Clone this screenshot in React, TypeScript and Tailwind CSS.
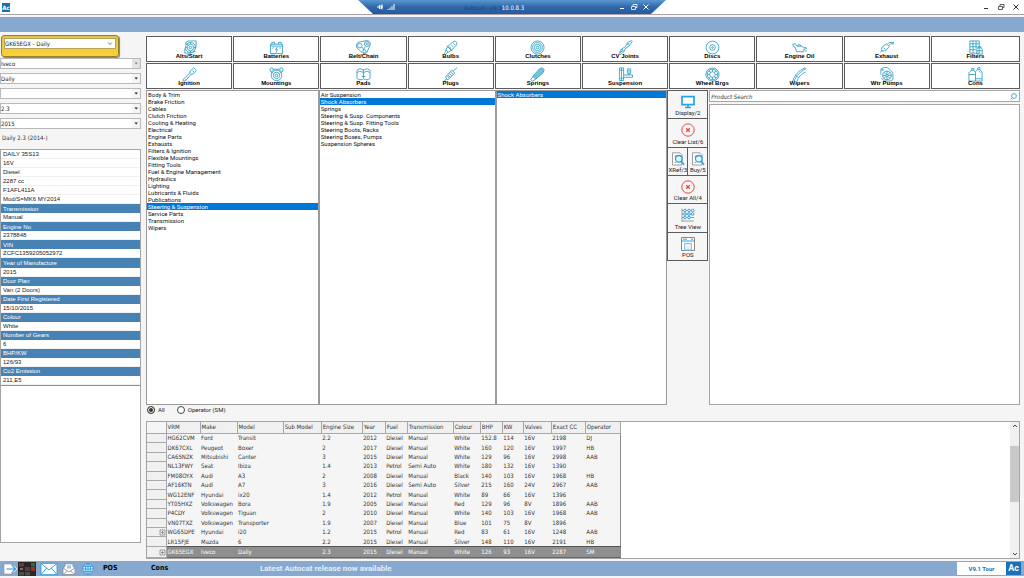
import { useState } from "react";
import type { ReactNode } from "react";

const categoryIcons: Record<string, ReactNode> = {
  alternator: (
    <>
      <circle cx="9" cy="8" r="5.4" />
      <circle cx="9" cy="8" r="3.4" />
      <circle cx="9" cy="8" r="1.3" />
      <path d="M4 5V2.5L7 1h8v6l-1 2M3 9v5h6l5-2M5 4l2 2M12 10l2 2M9 2.6v2M9 11.5v2M3.6 8h2M12.4 8h2" />
    </>
  ),
  battery: (
    <>
      <path d="M1.5 4.5h13v10h-13zM3 4.5v-2h3v2M10 4.5v-2h3v2M1.5 6.5h13" />
      <path d="M8.8 7.5 7 10.5h2L7.4 13.4M3.5 8.5h1.6M11 8.5h1.6" />
    </>
  ),
  belt: (
    <>
      <circle cx="4" cy="6" r="2.4" />
      <circle cx="11.5" cy="4.2" r="2.6" />
      <circle cx="11.5" cy="4.2" r=".8" />
      <circle cx="9" cy="12" r="1.8" />
      <path d="M3 2.2 11.500.6c3 0 4.500 3 3.300 5.400l-3.300 7.400c-1 1.800-3.200 1.800-4.500.4L1 8.500C-.3 6 .6 2.800 3 2.200zM6.500 7.500l1.500 2.800 1.800-3.200" />
    </>
  ),
  bulb: (
    <>
      <path d="M10 2.5 13 1l2 2-1.2 3L9 11 5 7z" />
      <path d="m5 7-1.8 3.4L5.6 13 9 11M3.6 10.4 1.5 14.6M5.4 12.8 3 15M11 3.5l1.8 1.8M9 5.5l1.8 1.8M7 7.5 8.6 9M4 6l6 5.6" />
    </>
  ),
  clutch: (
    <>
      <circle cx="8" cy="8" r="7" />
      <circle cx="8" cy="8" r="5.2" />
      <circle cx="8" cy="8" r="3.4" />
      <circle cx="8" cy="8" r="1.4" />
    </>
  ),
  joint: (
    <>
      <path d="m11.500 2 2.800-1.400.8 1L13.500 4 11.600 6.600 8.400 8.600l-2 3.600L3 15.400 1.400 14l2.400-4.400L7.600 7.400l2-3.800z" />
      <path d="m9.600 3.600 2 2M3.800 9.600l2.600 2.600M4 12l1 1M4.600 10.400l-2 3.600M12 3l-1.500 2" />
    </>
  ),
  disc: (
    <>
      <circle cx="8" cy="8" r="6.8" />
      <circle cx="8" cy="8" r="3" />
      <circle cx="8" cy="8" r=".8" />
    </>
  ),
  oil: (
    <path d="M.8 4.500 3.400 4l2 2.600h4.800l2.200 1.600 2.400-.4.600 1.400-2.800.6V12.500H4.800L3.600 8 1.400 7zM6 6.600l.4-1.400h2.400l.6 1.400M15 10.600v1.800" />
  ),
  exhaust: (
    <path d="M3.600 7.200 8 4l3 3-3.800 4.400-3.800.4-.8-2zM3.400 11 1.200 13.500M9 4.600 10.800 2.600H16M10.600 6l1.800-2H16M5 8.500l2 1.500" />
  ),
  filter: (
    <>
      <path d="M2 1h10v13H2zM2 4h10M2 7.200h8M2 10.400h7M5.300 1v13M8.600 1v8" />
      <path d="M10 8.400h4.400l.8 1.600v5H9.400v-5zM11 8.400V7h2.400v1.400M9.600 11.400h5.600" />
    </>
  ),
  key: (
    <>
      <path d="M9 4 12.600.8l2.800 2.800L12.200 7.200 9.600 8 8.200 6.600z" />
      <path d="M8.200 6.600 1.400 13v2h2l6.200-7M3 13.200l1.400 1M5 11.200l1.400 1.200M11 3.600l1.800 1.800" />
    </>
  ),
  mounting: (
    <>
      <circle cx="8" cy="9" r="5.600" />
      <circle cx="8" cy="9" r="3.400" />
      <circle cx="8" cy="9" r="1.400" />
      <circle cx="2.800" cy="2.800" r="1.800" />
      <circle cx="13.200" cy="2.800" r="1.800" />
      <path d="M4.600 2.400h6.800M1.600 4.400l1.800 2.400M14.400 4.400l-1.800 2.400" />
    </>
  ),
  pads: (
    <path d="M1 3.500 4 1.800 7.500 3h1L12 1.800l3 1.700v8.500l-2 1.500H9.500L8 12.500l-1.500 1H3L1 12zM8 3v9.500M1 6l3-1.500L8 5.800l4-1.300L15 6M6 10h4" />
  ),
  plug: (
    <>
      <path d="m11 4 4-3.200M9.400 3.400l3.200 3L7.800 11 5 8.200zM5 8.200 2.800 10.600 4 13l1.400.6L7.800 11" />
      <path d="m3.400 12.600-2.200 2.800M8 5l3 3M6.600 6.600l3 3M4.600 9.600l2 2" />
    </>
  ),
  shock: (
    <>
      <path d="m10 2 3-1.200 2.200 2L14 6 6 13 3 10z" fill="#8fd0e6" />
      <path d="m3 10-2 3.400L2.600 15 6 13M4.600 8.600l3 3M6.200 7l3 3M8 5.400l3 3M9.600 3.800l3 3M11.400 2.400l2.600 2.600" />
    </>
  ),
  suspension: (
    <>
      <path d="M1.500 1h4.500v13.500H1.500zM3.700 1v13.500M1.500 12h4.500M1.500 3.500h4.500" />
      <path d="M6 8.500h9.500V11H6M11 8.500v-2M12.500 8.500v-2M10 2h3.500v4.500H10zM10 4.200h3.500" />
    </>
  ),
  bearing: (
    <>
      <circle cx="8" cy="8" r="7" />
      <circle cx="8" cy="8" r="5.600" />
      <circle cx="8" cy="8" r="3" />
      <path d="M8 2.400v2.400M8 11.200v2.400M2.400 8h2.400M11.200 8h2.400M4 4l1.700 1.700M10.300 10.300 12 12M12 4l-1.700 1.700M5.700 10.300 4 12" />
    </>
  ),
  wiper: (
    <path d="M.8 15C2.500 9 7 3.500 14 1l.6 1.200C8.400 5 4.400 9.600 2.400 15M5.500 15c1-4 4-7.600 9.300-9.600M4 9l2.500 2" />
  ),
  pump: (
    <>
      <circle cx="8.500" cy="9" r="4.600" />
      <circle cx="8.500" cy="9" r="1.200" />
      <path d="M2 8V2l3-1.400h4L13 4l1.800 3v6.500L12 15H6l-3.600-3M8.500 4.400v3.400M8.500 10.200v3.400M3.900 9h3.400M9.700 9h3.400M5.200 5.700l2.400 2.400M9.400 9.900l2.400 2.400M11.800 5.700 9.400 8.100M5.200 12.300l2.400-2.400" />
      <circle cx="4" cy="3" r=".8" />
    </>
  ),
  bottles: (
    <>
      <path d="M2 5 4.200 3.400h2L8 5.400V15H1V6zM4 3.400V1.500h2.400v1.900M1 8h7" />
      <path d="M8 4.800 10.400 2.800h2.200L15 5.400V15H8M10.400 2.800V.8h2.400v2M8 12.500h7M12 4.500l1.500 1.500" />
    </>
  ),
};

const categories: [string, string][] = [
  ["Alts/Start", "alternator"],
  ["Batteries", "battery"],
  ["Belt/Chain", "belt"],
  ["Bulbs", "bulb"],
  ["Clutches", "clutch"],
  ["CV Joints", "joint"],
  ["Discs", "disc"],
  ["Engine Oil", "oil"],
  ["Exhaust", "exhaust"],
  ["Filters", "filter"],
  ["Ignition", "key"],
  ["Mountings", "mounting"],
  ["Pads", "pads"],
  ["Plugs", "plug"],
  ["Springs", "shock"],
  ["Suspension", "suspension"],
  ["Wheel Brgs", "bearing"],
  ["Wipers", "wiper"],
  ["Wtr Pumps", "pump"],
  ["Cons", "bottles"],
];

const sections = [
  "Body & Trim", "Brake Friction", "Cables", "Clutch Friction", "Cooling & Heating",
  "Electrical", "Engine Parts", "Exhausts", "Filters & Ignition", "Flexible Mountings",
  "Fitting Tools", "Fuel & Engine Management", "Hydraulics", "Lighting",
  "Lubricants & Fluids", "Publications", "Steering & Suspension", "Service Parts",
  "Transmission", "Wipers",
];

const groups = [
  "Air Suspension", "Shock Absorbers", "Springs", "Steering & Susp. Components",
  "Steering & Susp. Fitting Tools", "Steering Boots, Racks", "Steering Boxes, Pumps",
  "Suspension Spheres",
];

const details: { text: string; heading?: boolean }[] = [
  { text: "DAILY 35S13" },
  { text: "16V" },
  { text: "Diesel" },
  { text: "2287 cc" },
  { text: "F1AFL411A" },
  { text: "Mod/S=MK6 MY2014" },
  { text: "Transmission", heading: true },
  { text: "Manual" },
  { text: "Engine No", heading: true },
  { text: "2378848" },
  { text: "VIN", heading: true },
  { text: "ZCFC1359205052972" },
  { text: "Year of Manufacture", heading: true },
  { text: "2015" },
  { text: "Door Plan", heading: true },
  { text: "Van (2 Doors)" },
  { text: "Date First Registered", heading: true },
  { text: "15/10/2015" },
  { text: "Colour", heading: true },
  { text: "White" },
  { text: "Number of Gears", heading: true },
  { text: "6" },
  { text: "BHP/KW", heading: true },
  { text: "126/93" },
  { text: "Co2 Emission", heading: true },
  { text: "211,E5" },
];

const columns = [
  "VRM", "Make", "Model", "Sub Model", "Engine Size", "Year", "Fuel",
  "Transmission", "Colour", "BHP", "KW", "Valves", "Exact CC", "Operator",
];

const vehicles = [
  ["HG62CVM", "Ford", "Transit", "", "2.2", "2012", "Diesel", "Manual", "White", "152.8", "114", "16V", "2198", "DJ"],
  ["DK67CXL", "Peugeot", "Boxer", "", "2", "2017", "Diesel", "Manual", "White", "160", "120", "16V", "1997", "HB"],
  ["CA65NZK", "Mitsubishi", "Canter", "", "3", "2015", "Diesel", "Manual", "White", "129", "96", "16V", "2998", "AAB"],
  ["NL13FWY", "Seat", "Ibiza", "", "1.4", "2013", "Petrol", "Semi Auto", "White", "180", "132", "16V", "1390", ""],
  ["FM08OYX", "Audi", "A3", "", "2", "2008", "Diesel", "Manual", "Black", "140", "103", "16V", "1968", "HB"],
  ["AF16KTN", "Audi", "A7", "", "3", "2016", "Diesel", "Semi Auto", "Silver", "215", "160", "24V", "2967", "AAB"],
  ["WG12ENF", "Hyundai", "ix20", "", "1.4", "2012", "Petrol", "Manual", "White", "89", "66", "16V", "1396", ""],
  ["YT05HXZ", "Volkswagen", "Bora", "", "1.9", "2005", "Diesel", "Manual", "Red", "129", "96", "8V", "1896", "AAB"],
  ["P4CDY", "Volkswagen", "Tiguan", "", "2", "2010", "Diesel", "Manual", "White", "140", "103", "16V", "1968", "AAB"],
  ["VN07TXZ", "Volkswagen", "Transporter", "", "1.9", "2007", "Diesel", "Manual", "Blue", "101", "75", "8V", "1896", ""],
  ["WG65DPE", "Hyundai", "i20", "", "1.2", "2015", "Petrol", "Manual", "Red", "83", "61", "16V", "1248", "AAB"],
  ["LR15FJE", "Mazda", "6", "", "2.2", "2015", "Diesel", "Manual", "Silver", "148", "110", "16V", "2191", "HB"],
  ["GK65EGX", "Iveco", "Daily", "", "2.3", "2015", "Diesel", "Manual", "White", "126", "93", "16V", "2287", "SM"],
];

function WindowControls({ className }: { className: string }) {
  return (
    <div className={className}>
      <button type="button" aria-label="Minimise">
        <svg className="size-2" viewBox="0 0 8 8" fill="none" stroke="currentColor">
          <path d="M2 5.500h4" />
        </svg>
      </button>
      <button type="button" aria-label="Restore">
        <svg className="size-2" viewBox="0 0 8 8" fill="none" stroke="currentColor" strokeWidth=".8">
          <path d="M1.500 3.500h4v3h-4zM3 3.500v-2h4v3H5.500" />
        </svg>
      </button>
      <button type="button" aria-label="Close">
        <svg className="size-2" viewBox="0 0 8 8" fill="none" stroke="currentColor">
          <path d="m1.500 1.500 5 5M6.500 1.500l-5 5" />
        </svg>
      </button>
    </div>
  );
}

function TitleBar() {
  return (
    <header className="grid h-[15px] shrink-0 grid-cols-[1fr_308px_1fr] border-b border-[#a9a3a8] bg-white">
      <div className="flex items-center pl-[2px]">
        <span className="flex h-[9px] w-2 items-center justify-center bg-[#1a6fa8] text-[6px] font-bold text-white">Ac</span>
      </div>
      <div className="grid grid-cols-[1fr_auto_1fr] items-center bg-linear-to-b from-[#5b97cf] via-[#2f68aa] to-[#265a9b] pr-4 pl-[18px] text-[6px] text-white [clip-path:polygon(0_0,100%_0,calc(100%-15px)_100%,15px_100%)]">
        <div className="flex items-center justify-between">
          <svg className="h-2 w-5" viewBox="0 0 20 8" fill="none" stroke="currentColor">
            <path d="M1 4h2.500M3.500 2v4M3.500 3h2.500v2H3.500M6 1.500v5" />
            <path d="M12 7V6M14 7V4.500M16 7V3M18 7V1" />
          </svg>
          <span className="text-[#1d4780]">Autocat - v9.1</span>
        </div>
        <span>10.0.8.3</span>
        <WindowControls className="flex items-center justify-end gap-1" />
      </div>
      <WindowControls className="flex items-center justify-end gap-[7px] pr-1 text-[#333]" />
    </header>
  );
}

function Picker({ label, value, disabled = false }: { label: string; value: string; disabled?: boolean }) {
  return (
    <div className="relative flex h-[11px] border border-[#b9b9b9] bg-white">
      <select aria-label={label} disabled={disabled} className="w-full appearance-none text-[6px] leading-[9px] text-[#222] opacity-100 outline-none">
        <option>{value}</option>
      </select>
      <svg
        className={`pointer-events-none absolute inset-y-0 right-0 h-full w-2 ${disabled ? "bg-[#e4e4e4] text-[#888]" : "bg-[#f4f4f4] text-[#222]"}`}
        viewBox="0 0 8 9"
        fill="currentColor"
      >
        <path d="M2.500 3.600h3.400L4.200 5.600z" />
      </svg>
    </div>
  );
}

function VehiclePanel() {
  return (
    <aside className="flex w-[141px] shrink-0 flex-col pb-4">
      <div className="mr-[22px] ml-px h-[22px] rounded-[3px] border border-[#96802c] bg-linear-to-b from-[#e2c24b] to-[#fbd035] p-[2px] shadow-[1px_1px_1px_#8c804f]">
        <div className="relative flex h-[11px] border border-[#b9a55c] bg-white">
          <select aria-label="Vehicle" className="w-full appearance-none text-[6px] leading-[9px] text-[#222] outline-none">
            <option>GK65EGX - Daily</option>
          </select>
          <svg className="pointer-events-none absolute inset-y-0 right-px h-full w-2" viewBox="0 0 8 9" fill="none" stroke="#555" strokeWidth=".8">
            <path d="m2 3.500 2 2 2-2" />
          </svg>
        </div>
      </div>
      <div className="mt-px flex flex-col gap-1">
        <Picker label="Make" value="Iveco" disabled />
        <Picker label="Model" value="Daily" />
        <Picker label="Sub model" value="" />
        <Picker label="Engine size" value="2.3" />
        <Picker label="Year" value="2015" />
      </div>
      <p className="mb-[3px] pl-[2px] text-[6px] leading-[17px] text-[#333]">Daily 2.3 (2014-)</p>
      <div className="flex flex-1 flex-col border border-[#a5a5a5] bg-white">
        <ul className="grid h-[236px] shrink-0 auto-rows-fr border-b border-[#8f8f8f] font-['Liberation_Sans',Arial,sans-serif] text-[6px] leading-[8px]">
          {details.map((row) => (
            <li
              key={row.text}
              className={
                row.heading
                  ? "flex items-center bg-[#4682b4] pl-[2px] text-white"
                  : "flex items-center border-b border-[#f0f0f0] pl-[2px] text-[#222]"
              }
            >
              {row.text}
            </li>
          ))}
        </ul>
      </div>
    </aside>
  );
}

function CategoryGrid() {
  return (
    <nav className="grid grid-cols-[repeat(9,86fr)_89fr] gap-px">
      {categories.map(([label, icon]) => (
        <button key={label} type="button" className="flex h-[26px] flex-col items-center border border-[#5c5c5c] bg-white pt-[3px]">
          <svg className="size-[15px] shrink-0" viewBox="0 0 16 16" fill="none" stroke="#2d9cc2" strokeWidth=".9">
            {categoryIcons[icon]}
          </svg>
          <span className="-mt-[3px] font-['Liberation_Sans',Arial,sans-serif] text-[6px] leading-[8px] font-bold text-black">{label}</span>
        </button>
      ))}
    </nav>
  );
}

function PickList({ label, items, initial }: { label: string; items: string[]; initial: string }) {
  const [selected, setSelected] = useState(initial);
  return (
    <ul aria-label={label} className="min-w-0 overflow-hidden border border-[#9a9a9a] bg-white">
      {items.map((item) => (
        <li key={item} className="flex">
          <button
            type="button"
            onClick={() => setSelected(item)}
            className={`w-full truncate pl-px text-left font-[Roboto,sans-serif] text-[6px] leading-[7px] ${item === selected ? "bg-[#0078d7] text-white" : "text-[#111]"}`}
          >
            {item}
          </button>
        </li>
      ))}
    </ul>
  );
}

function DocumentSearchIcon() {
  return (
    <svg className="size-[14px]" viewBox="0 0 14 14" fill="none">
      <path d="M1.500.8h7.500l2 2V13h-9.500zM3.500 4h2M3.500 10.500h2" fill="#fff" stroke="#888" strokeWidth=".8" />
      <circle cx="7.800" cy="6.800" r="3.300" fill="#e8f7fd" stroke="#2ba0d8" strokeWidth="1.300" />
      <path d="m10.200 9.300 2.800 3.400" stroke="#2ba0d8" strokeWidth="1.500" />
    </svg>
  );
}

function ClearIcon() {
  return (
    <svg className="size-[14px]" viewBox="0 0 14 14" fill="none" stroke="#df4a48">
      <circle cx="7" cy="7" r="6.200" />
      <path d="m5.200 5.200 3.600 3.600M8.800 5.200 5.200 8.800" strokeWidth="1.300" />
    </svg>
  );
}

function ToolButton({ label, children }: { label: string; children: ReactNode }) {
  return (
    <button type="button" className="flex min-w-0 flex-1 flex-col items-center justify-between overflow-hidden bg-[#f6f6f6] pt-[4px] pb-px">
      {children}
      <span className="font-[Roboto,sans-serif] text-[6px] leading-[8px] whitespace-nowrap text-[#222]">{label}</span>
    </button>
  );
}

function ToolBar() {
  return (
    <div className="grid h-[171px] auto-rows-fr gap-px border border-[#5c5c5c] bg-[#5c5c5c]">
      <ToolButton label="Display/2">
        <svg className="size-[14px]" viewBox="0 0 14 14" fill="none" stroke="#2ba3dc">
          <path d="M1 1.700h12v8H1z" strokeWidth="1.700" fill="#fff" />
          <path d="M7 10v2.500M4 12.500h6" strokeWidth="1.500" />
        </svg>
      </ToolButton>
      <ToolButton label="Clear List/6">
        <ClearIcon />
      </ToolButton>
      <div className="flex gap-px">
        <ToolButton label="XRef/3">
          <DocumentSearchIcon />
        </ToolButton>
        <ToolButton label="Buy/5">
          <DocumentSearchIcon />
        </ToolButton>
      </div>
      <ToolButton label="Clear All/4">
        <ClearIcon />
      </ToolButton>
      <ToolButton label="Tree View">
        <svg className="size-[14px]" viewBox="0 0 14 14" fill="none" stroke="#2ba3dc">
          <path d="M1 .5v13M1 2.500h12M1 6h12M1 9.500h12M1 13h12" stroke="#888" strokeWidth=".8" />
          <circle cx="4" cy="2.500" r="1.300" fill="#fff" />
          <circle cx="8" cy="2.500" r="1.300" fill="#fff" />
          <circle cx="11.700" cy="2.500" r="1.300" fill="#fff" />
          <circle cx="4" cy="6" r="1.300" fill="#fff" />
          <circle cx="8" cy="6" r="1.300" fill="#fff" />
          <circle cx="11.700" cy="6" r="1.300" fill="#fff" />
          <circle cx="4" cy="9.500" r="1.300" fill="#fff" />
          <circle cx="8" cy="9.500" r="1.300" fill="#fff" />
        </svg>
      </ToolButton>
      <ToolButton label="POS">
        <svg className="size-[14px]" viewBox="0 0 14 14" fill="none">
          <path d="M.5.500h13v13H.5z" fill="#fff" stroke="#888" />
          <path d="M1 4h12" stroke="#2ba3dc" />
          <path d="M2 2.200h4M10 2.200h2" stroke="#888" />
          <path d="M3.500 6.500h7v6.500h-7z" fill="#e4f4fb" stroke="#7cc4e4" />
        </svg>
      </ToolButton>
    </div>
  );
}

function ProductSearch() {
  return (
    <section className="ml-px flex min-w-0 flex-col gap-[2px]">
      <label className="flex h-3 items-center border border-[#a5a5a5] bg-white pr-[2px]">
        <input type="text" aria-label="Product Search" placeholder="Product Search" className="min-w-0 flex-1 pl-px text-[6px] leading-[9px] italic outline-none placeholder:text-[#333]" />
        <svg className="size-[7px]" viewBox="0 0 7 7" fill="none" stroke="#3d9fd0" strokeWidth=".9">
          <circle cx="4" cy="3" r="2.400" />
          <path d="M2.300 4.700.5 6.500" />
        </svg>
      </label>
      <div className="flex-1 border border-[#a5a5a5] bg-white" />
    </section>
  );
}

function VehicleTable() {
  return (
    <section className="flex h-[138px] shrink-0 justify-between border border-[#a5a5a5] bg-white">
      <table className="h-[136px] w-[474px] table-fixed border-r border-[#8a8a8a] bg-[#f5f5f5] text-[6px] leading-[8px] text-[#333]">
        <colgroup>
          <col className="w-[19px]" />
          <col className="w-[34px]" />
          <col className="w-[37px]" />
          <col className="w-[46px]" />
          <col className="w-[38px]" />
          <col className="w-[41px]" />
          <col className="w-[23px]" />
          <col className="w-[22px]" />
          <col className="w-[46px]" />
          <col className="w-[27px]" />
          <col className="w-[22px]" />
          <col className="w-[21px]" />
          <col className="w-[28px]" />
          <col className="w-[34px]" />
          <col className="w-[35px]" />
        </colgroup>
        <thead>
          <tr className="h-[11px]">
            <td className="border-r border-b border-[#a8a8a8] p-0" />
            {columns.map((name) => (
              <th key={name} scope="col" className="border-r border-b border-[#a8a8a8] bg-[#f0f0f0] p-0 pl-px text-left font-normal whitespace-nowrap">
                {name}
              </th>
            ))}
          </tr>
        </thead>
        <tbody>
          {vehicles.map((vehicle, index) => {
            const current = index === vehicles.length - 1;
            return (
              <tr key={vehicle[0]} className={current ? "bg-[#8f8f8f] text-white" : ""}>
                <td className="border-r border-b border-[#a8a8a8] bg-[#f0f0f0] p-0">
                  {index === 10 || current ? (
                    <button type="button" aria-label="Expand row" className="ml-auto flex">
                      <svg className="size-[7px]" viewBox="0 0 7 7" fill="none" stroke="#666" strokeWidth=".6">
                        <path d="M1 1h5v5H1zM2 3.500h3M3.500 2v3" />
                      </svg>
                    </button>
                  ) : null}
                </td>
                {vehicle.map((cell, column) => (
                  <td key={columns[column]} className={current ? "border-y border-t-[#555] border-b-[#666] p-0 pl-px whitespace-nowrap" : "p-0 pl-px whitespace-nowrap"}>
                    {cell}
                  </td>
                ))}
              </tr>
            );
          })}
        </tbody>
      </table>
      <div className="flex w-[9px] flex-col items-center justify-between bg-[#f0f0f0]">
        <svg className="size-2" viewBox="0 0 8 8" fill="none" stroke="#444">
          <path d="m2 5 2-2 2 2" />
        </svg>
        <div className="mb-8 h-14 w-full bg-[#c9c9c9]" />
        <svg className="size-2" viewBox="0 0 8 8" fill="none" stroke="#444">
          <path d="m2 3 2 2 2-2" />
        </svg>
      </div>
    </section>
  );
}

function StatusBar() {
  return (
    <footer className="mb-[2px] flex h-[15px] shrink-0 items-center bg-[#87a9d0] pr-[3px]">
      <div className="flex w-[103px] shrink-0 items-center">
        <button type="button" aria-label="Exit" className="ml-[3px]">
          <svg className="h-3 w-[14px]" viewBox="0 0 14 12" fill="none">
            <path d="M9 3V.8H.8v10.400H9V9" fill="#fff" stroke="#909090" />
            <path d="M3.500 6h9M9.800 3.300 12.500 6 9.800 8.700" stroke="#fff" strokeWidth="2.400" />
            <path d="M3.500 6h9M9.800 3.300 12.500 6 9.800 8.700" stroke="#2198d6" strokeWidth="1.100" />
          </svg>
        </button>
        <button type="button" aria-label="Gallery" className="ml-px">
          <svg className="h-[14px] w-[18px]" viewBox="0 0 18 14">
            <path d="M0 0h18v14H0z" fill="#2b2426" />
            <path d="M1 1h5v3.500H1zM7 5h5v4H7z" fill="#5e3c44" />
            <path d="M13 1h4v3.500h-4z" fill="#356b3d" />
            <path d="M13 5h4v4h-4z" fill="#8d3434" />
            <path d="M1 10h5v3.500H1zM7 10h5v3.500H7z" fill="#49504b" />
            <path d="M2 6h3v2H2z" fill="#826a5b" />
          </svg>
        </button>
        <button type="button" aria-label="Mail" className="ml-[4px]">
          <svg className="h-[14px] w-[18px]" viewBox="0 0 19 14" fill="#fff" stroke="#2f9fd8">
            <path d="M1 1h17v12H1z" />
            <path d="m1 1 8.500 7L18 1M1 13l6-7M18 13l-6-7" fill="none" />
          </svg>
        </button>
        <button type="button" aria-label="Inbox" className="ml-[4px]">
          <svg className="h-3 w-[14px]" viewBox="0 0 14 12" fill="#fff" stroke="#858b92" strokeWidth=".8">
            <path d="M1 5 3 3.500V.8h8v2.700L13 5v6.500H1z" />
            <path d="m1 5 6 4 6-4M1 11.500l4.500-3.500M13 11.500 8.500 8" fill="none" />
            <path d="M5 3h4M5 4.800h4" stroke="#2f9fd8" />
          </svg>
        </button>
        <button type="button" aria-label="Web" className="ml-[6px]">
          <svg className="size-3" viewBox="0 0 12 12" fill="#d9f0fb" stroke="#2196d3" strokeWidth=".8">
            <circle cx="6" cy="6" r="5.300" />
            <ellipse cx="6" cy="6" rx="2.500" ry="5.300" />
            <path d="M.7 6h10.600M1.500 3.400h9M1.500 8.600h9M6 .7v10.600" />
          </svg>
        </button>
      </div>
      <button type="button" className="w-12 shrink-0 text-left text-[7px] font-bold text-black">POS</button>
      <button type="button" className="w-[109px] shrink-0 text-left text-[7px] font-bold text-black">Cons</button>
      <p className="flex-1 font-[Roboto,sans-serif] text-[8px] leading-[14px] font-bold text-[#e3edf8]">Latest Autocat release now available</p>
      <span className="flex h-[13px] w-[49px] items-center justify-center bg-white font-[Roboto,sans-serif] text-[6px] font-bold text-[#1a6fb5]">V9.1 Tour</span>
      <span className="flex h-[13px] w-[15px] items-center justify-center bg-[#1a6fb5] font-[Roboto,sans-serif] text-[9px] font-bold text-white">Ac</span>
    </footer>
  );
}

export default function App() {
  const [filter, setFilter] = useState("all");
  return (
    <div className="flex h-screen min-h-[578px] w-full flex-col bg-[#f5f5f5] font-['DejaVu_Sans_Condensed','DejaVu_Sans',sans-serif]">
      <TitleBar />
      <div className="mt-[2px] h-[15px] shrink-0 bg-[#87a9d0]" />
      <main className="flex min-h-0 flex-1 gap-[5px] pt-[3px] pr-1 pb-[2px]">
        <VehiclePanel />
        <div className="flex min-w-0 flex-1 flex-col pt-px">
          <CategoryGrid />
          <div className="mt-px grid min-h-0 flex-1 grid-cols-[173fr_177fr_172fr_41px_312fr]">
            <PickList label="Sections" items={sections} initial="Steering & Suspension" />
            <PickList label="Groups" items={groups} initial="Shock Absorbers" />
            <PickList label="Products" items={["Shock Absorbers"]} initial="Shock Absorbers" />
            <ToolBar />
            <ProductSearch />
          </div>
          <fieldset className="flex h-4 shrink-0 items-center gap-3 pl-px font-[Roboto,sans-serif] text-[6px] text-[#222]">
            <label className="flex items-center gap-[3px]">
              <input type="radio" name="filter" checked={filter === "all"} onChange={() => setFilter("all")} className="size-2 appearance-none rounded-full border border-[#444] bg-white checked:bg-[#333] checked:shadow-[inset_0_0_0_1px_#fff]" />
              All
            </label>
            <label className="flex items-center gap-[3px]">
              <input type="radio" name="filter" checked={filter === "operator"} onChange={() => setFilter("operator")} className="size-2 appearance-none rounded-full border border-[#444] bg-white checked:bg-[#333] checked:shadow-[inset_0_0_0_1px_#fff]" />
              Operator (SM)
            </label>
          </fieldset>
          <VehicleTable />
        </div>
      </main>
      <StatusBar />
    </div>
  );
}
